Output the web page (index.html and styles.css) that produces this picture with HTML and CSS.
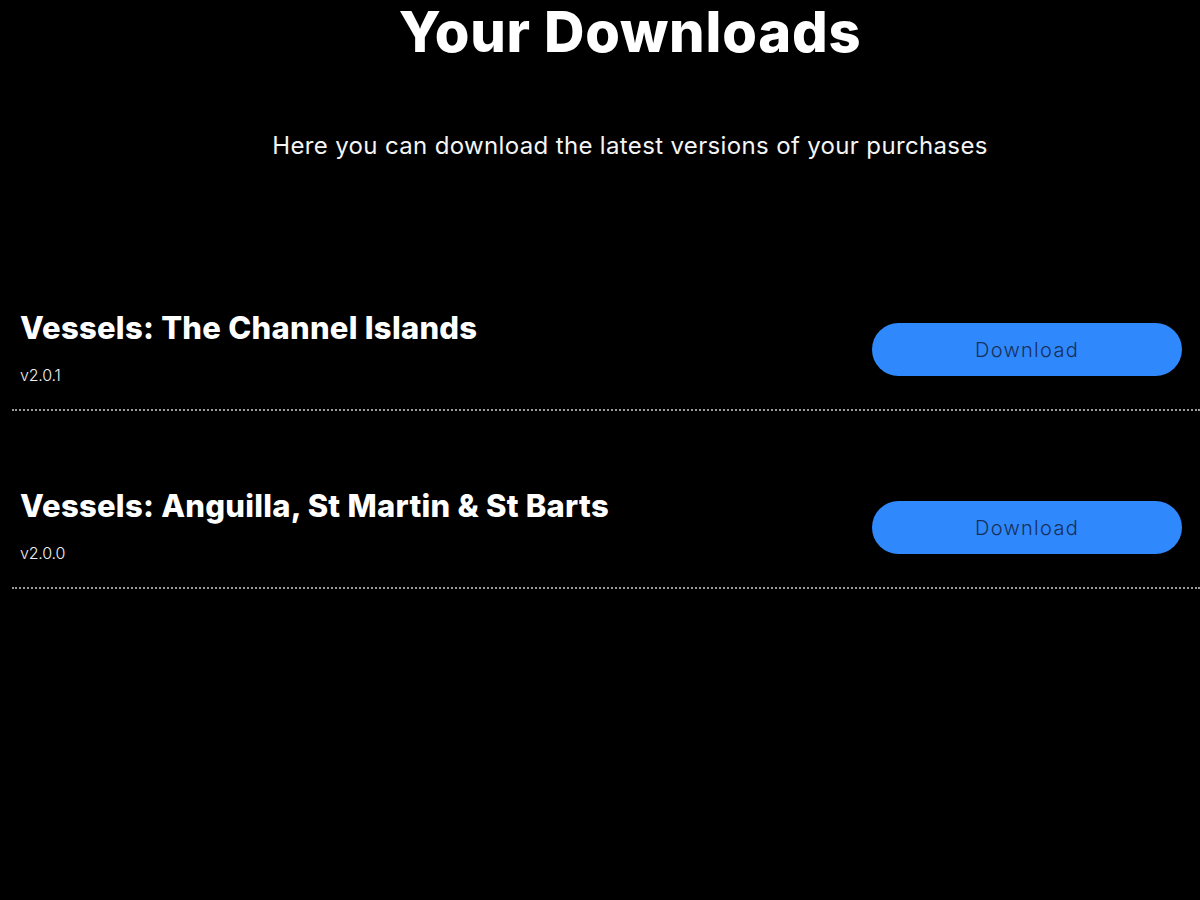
FILE: index.html
```html
<!DOCTYPE html>
<html lang="en">
<head>
    <meta charset="UTF-8">
    <meta name="viewport" content="width=device-width, initial-scale=1.0">
    <title>Your Downloads</title>
    <link rel="stylesheet" href="styles.css">
</head>
<body>

<div class="page">
    <div class="header">
        <h1>Your Downloads</h1>
        <p class="intro">Here you can download the latest versions of your purchases</p>
    </div>

    <div class="downloads">
        <div class="download-item">
            <div class="info">
                <h3>Vessels: The Channel Islands</h3>
                <span class="version">v2.0.1</span>
            </div>
            <button class="download-btn">Download</button>
        </div>
        <div class="download-item">
            <div class="info">
                <h3>Vessels: Anguilla, St Martin &amp; St Barts</h3>
                <span class="version">v2.0.0</span>
            </div>
            <button class="download-btn">Download</button>
        </div>
    </div>
</div>

</body>
</html>
```

FILE: styles.css
```css
* {
    margin: 0;
    padding: 0;
    box-sizing: border-box;
}

body {
    font-family: 'Inter', 'Noto Sans', sans-serif;
    background-color: #000;
    color: #fff;
}

.header {
    padding-left: 60px;
}

h1 {
    text-align: center;
    font-size: 56px;
    font-weight: 800;
    line-height: 64px;
    letter-spacing: 0.8px;
}

.intro {
    text-align: center;
    font-size: 24px;
    line-height: 30px;
    font-weight: 400;
    letter-spacing: 0.35px;
    margin-top: 67px;
    color: #f4f4f4;
}

.downloads {
    margin-top: 123px;
    margin-left: 12px;
}

.download-item {
    display: flex;
    justify-content: space-between;
    align-items: center;
    padding: 24px 18px 24px 8px;
    border-bottom: 2px dotted #9a9a9a;
}

.download-item + .download-item {
    margin-top: 51px;
}

.download-item h3 {
    font-size: 31px;
    font-weight: 800;
    letter-spacing: 0.25px;
    line-height: 40px;
}

.version {
    display: block;
    margin-top: 18px;
    font-size: 16px;
    line-height: 19px;
    font-weight: 300;
    letter-spacing: -0.2px;
    color: #f0f0f0;
}

.download-btn {
    width: 310px;
    height: 53px;
    margin-top: 6px;
    border: none;
    border-radius: 27px;
    background-color: #2f88fc;
    color: #17305a;
    font-family: 'Inter', 'Noto Sans', sans-serif;
    font-size: 20px;
    font-weight: 300;
    letter-spacing: 1.3px;
    cursor: pointer;
}
```
